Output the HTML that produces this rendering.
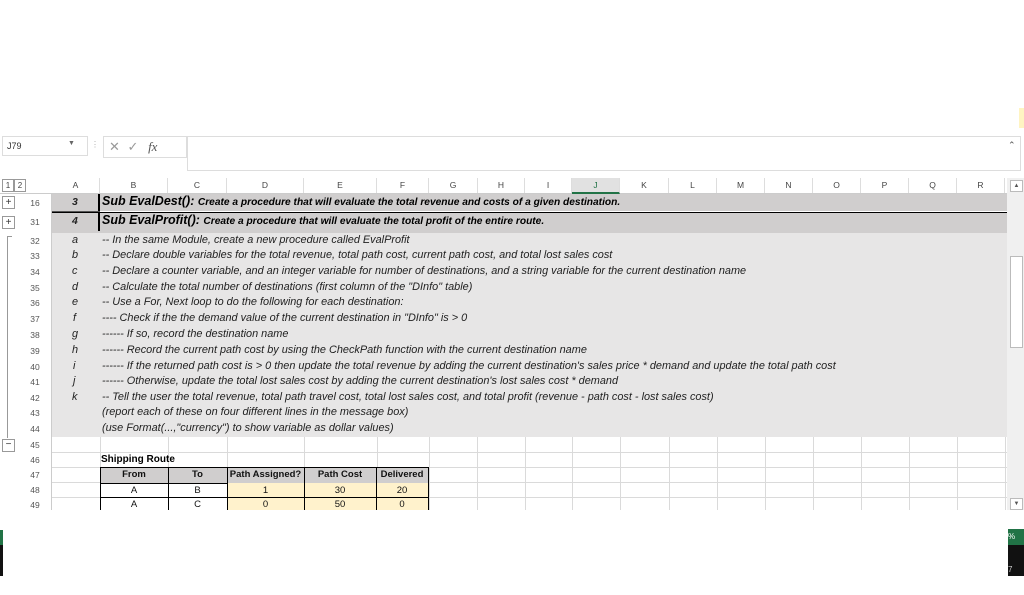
<!DOCTYPE html><html><head><style>
body{margin:0;width:1024px;height:576px;background:#fff;position:relative;overflow:hidden;font-family:"Liberation Sans",sans-serif}
.a{position:absolute}
.t{position:absolute;font-size:10.9px;font-style:italic;color:#222;white-space:nowrap}
.rn{position:absolute;left:22px;width:26px;text-align:center;font-size:8.5px;color:#555}
.ch{position:absolute;top:178px;height:15px;font-size:8.5px;color:#444;text-align:center;line-height:15px;border-right:1px solid #ddd}
.hl{position:absolute;left:52px;width:955px;height:1px;background:#dadada}
.vl{position:absolute;width:1px;background:#dadada}
.tc{position:absolute;font-size:9.5px;text-align:center;color:#111}
</style></head><body>
<div class="a" style="left:1019px;top:108px;width:5px;height:20px;background:#fff4c2"></div>
<div class="a" style="left:2px;top:136px;width:80px;height:18px;border:1px solid #ddd;font-size:9px;line-height:18px;padding-left:4px;color:#333">J79</div>
<div class="a" style="left:68px;top:140px;font-size:7px;color:#666">▼</div>
<div class="a" style="left:91px;top:140px;font-size:8px;color:#aaa">⋮</div>
<div class="a" style="left:103px;top:136px;width:82px;height:20px;border:1px solid #ddd;font-size:13px;color:#999;line-height:20px"><span style="margin-left:5px">✕</span> <span style="margin-left:4px">✓</span> <i style="font-family:'Liberation Serif';color:#555;margin-left:6px">fx</i></div>
<div class="a" style="left:187px;top:136px;width:832px;height:33px;border:1px solid #ddd"></div>
<div class="a" style="left:1008px;top:140px;font-size:9px;color:#555">⌃</div>
<div class="a" style="left:2px;top:179px;width:10px;height:11px;border:1px solid #999;font-size:8px;text-align:center;line-height:11px;color:#444">1</div>
<div class="a" style="left:14px;top:179px;width:10px;height:11px;border:1px solid #999;font-size:8px;text-align:center;line-height:11px;color:#444">2</div>
<div class="a" style="left:2px;top:196px;width:11px;height:11px;border:1px solid #999;font-size:10px;text-align:center;line-height:11px;color:#333">+</div>
<div class="a" style="left:2px;top:216px;width:11px;height:11px;border:1px solid #999;font-size:10px;text-align:center;line-height:11px;color:#333">+</div>
<div class="a" style="left:2px;top:439px;width:11px;height:11px;border:1px solid #999;font-size:10px;text-align:center;line-height:10px;color:#333">−</div>
<div class="a" style="left:7px;top:236px;width:1px;height:202px;background:#999"></div>
<div class="a" style="left:7px;top:236px;width:5px;height:1px;background:#999"></div>
<div class="a" style="left:0;top:177px;width:1007px;height:16px;border-bottom:1px solid #ccc"></div>
<div class="ch" style="left:52px;width:47px">A</div><div class="ch" style="left:100px;width:67px">B</div><div class="ch" style="left:168px;width:58px">C</div><div class="ch" style="left:227px;width:76px">D</div><div class="ch" style="left:304px;width:72px">E</div><div class="ch" style="left:377px;width:51px">F</div><div class="ch" style="left:429px;width:48px">G</div><div class="ch" style="left:478px;width:46px">H</div><div class="ch" style="left:525px;width:46px">I</div><div class="ch" style="left:572px;width:47px;background:#e1e1e1;border-bottom:2px solid #217346;color:#217346;height:14px">J</div><div class="ch" style="left:620px;width:48px">K</div><div class="ch" style="left:669px;width:47px">L</div><div class="ch" style="left:717px;width:47px">M</div><div class="ch" style="left:765px;width:47px">N</div><div class="ch" style="left:813px;width:47px">O</div><div class="ch" style="left:861px;width:47px">P</div><div class="ch" style="left:909px;width:47px">Q</div><div class="ch" style="left:957px;width:47px">R</div>
<div class="vl" style="left:100px;top:437px;height:73px"></div><div class="vl" style="left:168px;top:437px;height:73px"></div><div class="vl" style="left:227px;top:437px;height:73px"></div><div class="vl" style="left:304px;top:437px;height:73px"></div><div class="vl" style="left:377px;top:437px;height:73px"></div><div class="vl" style="left:429px;top:437px;height:73px"></div><div class="vl" style="left:477px;top:437px;height:73px"></div><div class="vl" style="left:525px;top:437px;height:73px"></div><div class="vl" style="left:572px;top:437px;height:73px"></div><div class="vl" style="left:620px;top:437px;height:73px"></div><div class="vl" style="left:669px;top:437px;height:73px"></div><div class="vl" style="left:717px;top:437px;height:73px"></div><div class="vl" style="left:765px;top:437px;height:73px"></div><div class="vl" style="left:813px;top:437px;height:73px"></div><div class="vl" style="left:861px;top:437px;height:73px"></div><div class="vl" style="left:909px;top:437px;height:73px"></div><div class="vl" style="left:957px;top:437px;height:73px"></div><div class="vl" style="left:1005px;top:437px;height:73px"></div>
<div class="hl" style="top:452px"></div><div class="hl" style="top:467px"></div><div class="hl" style="top:482px"></div><div class="hl" style="top:497px"></div>
<div class="a" style="left:51px;top:194px;width:1px;height:316px;background:#ccc"></div>
<div class="a" style="left:52px;top:194px;width:955px;height:17px;background:#d0cece"></div>
<div class="a" style="left:52px;top:212px;width:955px;height:20px;background:#d0cece;border-top:1px solid #000"></div>
<div class="a" style="left:52px;top:233px;width:955px;height:204px;background:#e7e6e6"></div>
<div class="a" style="left:52px;top:194px;width:46px;height:37px;border-right:2px solid #000"></div>
<div class="a" style="left:52px;top:211px;width:48px;height:1px;background:#555"></div>
<div class="rn" style="top:198px">16</div><div class="rn" style="top:217px">31</div>
<div class="rn" style="top:236px">32</div><div class="rn" style="top:251px">33</div><div class="rn" style="top:267px">34</div><div class="rn" style="top:283px">35</div><div class="rn" style="top:298px">36</div><div class="rn" style="top:314px">37</div><div class="rn" style="top:330px">38</div><div class="rn" style="top:346px">39</div><div class="rn" style="top:362px">40</div><div class="rn" style="top:377px">41</div><div class="rn" style="top:393px">42</div><div class="rn" style="top:408px">43</div><div class="rn" style="top:424px">44</div><div class="rn" style="top:440px">45</div><div class="rn" style="top:455px">46</div><div class="rn" style="top:470px">47</div><div class="rn" style="top:485px">48</div><div class="rn" style="top:500px">49</div>
<div class="t" style="left:72px;top:196px;font-weight:bold;font-size:10.5px">3</div>
<div class="t" style="left:102px;top:194px;font-weight:bold;font-size:12.5px;color:#000">Sub EvalDest(): <span style="font-size:10.2px">Create a procedure that will evaluate the total revenue and costs of a given destination.</span></div>
<div class="t" style="left:72px;top:215px;font-weight:bold;font-size:10.5px">4</div>
<div class="t" style="left:102px;top:213px;font-weight:bold;font-size:12.5px;color:#000">Sub EvalProfit(): <span style="font-size:10.2px">Create a procedure that will evaluate the total profit of the entire route.</span></div>
<div class="t" style="left:72px;top:234px">a</div><div class="t" style="left:102px;top:234px">-- In the same Module, create a new procedure called EvalProfit</div>
<div class="t" style="left:72px;top:249px">b</div><div class="t" style="left:102px;top:249px">-- Declare double variables for the total revenue, total path cost, current path cost, and total lost sales cost</div>
<div class="t" style="left:72px;top:265px">c</div><div class="t" style="left:102px;top:265px">-- Declare a counter variable, and an integer variable for number of destinations, and a string variable for the current destination name</div>
<div class="t" style="left:72px;top:281px">d</div><div class="t" style="left:102px;top:281px">-- Calculate the total number of destinations (first column of the "DInfo" table)</div>
<div class="t" style="left:72px;top:296px">e</div><div class="t" style="left:102px;top:296px">-- Use a For, Next loop to do the following for each destination:</div>
<div class="t" style="left:73px;top:312px">f</div><div class="t" style="left:102px;top:312px">---- Check if the the demand value of the current destination in "DInfo" is &gt; 0</div>
<div class="t" style="left:72px;top:328px">g</div><div class="t" style="left:102px;top:328px">------ If so, record the destination name</div>
<div class="t" style="left:72px;top:344px">h</div><div class="t" style="left:102px;top:344px">------ Record the current path cost by using the CheckPath function with the current destination name</div>
<div class="t" style="left:73px;top:360px">i</div><div class="t" style="left:102px;top:360px">------ If the returned path cost is &gt; 0 then update the total revenue by adding the current destination's sales price * demand and update the total path cost</div>
<div class="t" style="left:73px;top:375px">j</div><div class="t" style="left:102px;top:375px">------ Otherwise, update the total lost sales cost by adding the current destination's lost sales cost * demand</div>
<div class="t" style="left:72px;top:391px">k</div><div class="t" style="left:102px;top:391px">-- Tell the user the total revenue, total path travel cost, total lost sales cost, and total profit (revenue - path cost - lost sales cost)</div>
<div class="t" style="left:102px;top:406px">(report each of these on four different lines in the message box)</div>
<div class="t" style="left:102px;top:422px">(use Format(...,"currency") to show variable as dollar values)</div>
<div class="t" style="left:101px;top:454px;font-style:normal;font-weight:bold;color:#000;font-size:10px">Shipping Route</div>
<div class="a" style="left:100px;top:467px;width:328px;height:15px;background:#d0cece;border-top:1px solid #000;border-bottom:1px solid #000"></div>
<div class="a" style="left:227px;top:483px;width:201px;height:27px;background:#fff2cc"></div>
<div class="a" style="left:100px;top:497px;width:328px;height:1px;background:#000"></div>
<div class="a" style="left:100px;top:467px;width:1px;height:43px;background:#000"></div><div class="a" style="left:168px;top:467px;width:1px;height:43px;background:#000"></div><div class="a" style="left:227px;top:467px;width:1px;height:43px;background:#000"></div><div class="a" style="left:304px;top:467px;width:1px;height:43px;background:#000"></div><div class="a" style="left:376px;top:467px;width:1px;height:43px;background:#000"></div><div class="a" style="left:428px;top:467px;width:1px;height:43px;background:#000"></div>
<div class="tc" style="left:100px;width:68px;top:469px;font-weight:bold">From</div><div class="tc" style="left:168px;width:59px;top:469px;font-weight:bold">To</div><div class="tc" style="left:227px;width:77px;top:469px;font-weight:bold">Path Assigned?</div><div class="tc" style="left:304px;width:72px;top:469px;font-weight:bold">Path Cost</div><div class="tc" style="left:376px;width:52px;top:469px;font-weight:bold">Delivered</div>
<div class="tc" style="left:100px;width:68px;top:485px">A</div><div class="tc" style="left:168px;width:59px;top:485px">B</div><div class="tc" style="left:227px;width:77px;top:485px">1</div><div class="tc" style="left:304px;width:72px;top:485px">30</div><div class="tc" style="left:376px;width:52px;top:485px">20</div>
<div class="tc" style="left:100px;width:68px;top:499px">A</div><div class="tc" style="left:168px;width:59px;top:499px">C</div><div class="tc" style="left:227px;width:77px;top:499px">0</div><div class="tc" style="left:304px;width:72px;top:499px">50</div><div class="tc" style="left:376px;width:52px;top:499px">0</div>
<div class="a" style="left:0;top:510px;width:1008px;height:20px;background:#fff"></div>
<div class="a" style="left:1007px;top:178px;width:17px;height:332px;background:#f0f0f0"></div>
<div class="a" style="left:1010px;top:180px;width:11px;height:10px;border:1px solid #bbb;background:#fff;font-size:6px;text-align:center;line-height:10px;color:#555">▲</div>
<div class="a" style="left:1010px;top:256px;width:11px;height:90px;border:1px solid #bbb;background:#fff"></div>
<div class="a" style="left:1010px;top:498px;width:11px;height:10px;border:1px solid #bbb;background:#fff;font-size:6px;text-align:center;line-height:10px;color:#555">▼</div>
<div class="a" style="left:1008px;top:529px;width:16px;height:16px;background:#217346;color:#fff;font-size:8px;line-height:16px">%</div>
<div class="a" style="left:1008px;top:545px;width:16px;height:31px;background:#111;color:#ccc;font-size:8px;line-height:50px">7</div>
<div class="a" style="left:0;top:530px;width:3px;height:15px;background:#217346"></div>
<div class="a" style="left:0;top:545px;width:3px;height:31px;background:#111"></div>
</body></html>
